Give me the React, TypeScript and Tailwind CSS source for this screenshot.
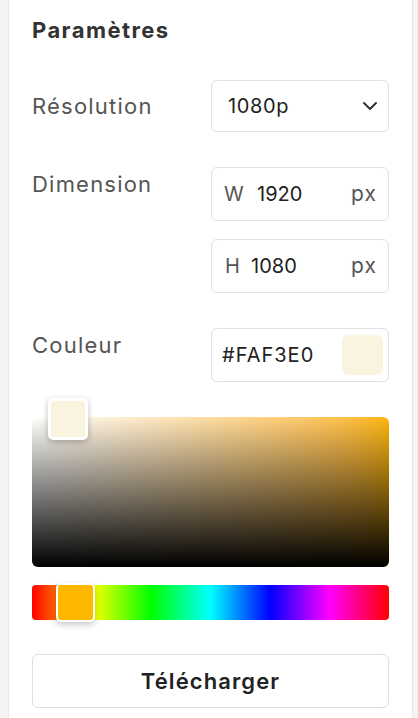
import { ChevronDown } from 'lucide-react';

// Settings panel with resolution, size and colour picker
const FIELD = 'h-[54px] rounded-md border border-[#e2e0e0] bg-white flex items-center';

function Label({ children, className = '' }: { children: React.ReactNode; className?: string }) {
  return <div className={`text-[22px] leading-7 text-[#555] tracking-[0.055em] ${className}`}>{children}</div>;
}

export default function App() {
  return (
    <div className="min-h-[718px] bg-[#f6f3f3] pl-[8px] pr-[5px] font-['Inter',sans-serif]">
      <div className="min-h-[718px] bg-white border-x border-[#ebe5e5] px-[23px] pt-[16px] pb-[10px]">
        <h2 className="text-[22px] leading-7 font-bold text-[#333] tracking-[0.065em]">Paramètres</h2>

        {/* Résolution */}
        <div className="mt-[36px] flex items-center">
          <Label className="w-[179px]">Résolution</Label>
          <div className={`${FIELD} flex-1 !h-[52px] justify-between pl-[16px] pr-[6px]`}>
            <span className="text-[20px] text-[#222] tracking-[0.03em]">1080p</span>
            <ChevronDown className="w-[24px] h-[24px] text-[#333]" strokeWidth={2} />
          </div>
        </div>

        {/* Dimension */}
        <div className="mt-[35px] flex items-start">
          <Label className="w-[179px] pt-[3px]">Dimension</Label>
          <div className="flex-1 flex flex-col gap-[18px]">
            <div className={`${FIELD} pl-[12px] pr-[11px] text-[20px]`}>
              <span className="text-[#555] w-[33px]">W</span>
              <span className="text-[#222]">1920</span>
              <span className="ml-auto text-[#555] text-[21px] tracking-[0.05em]">px</span>
            </div>
            <div className={`${FIELD} pl-[13px] pr-[11px] text-[20px]`}>
              <span className="text-[#555] w-[26px]">H</span>
              <span className="text-[#222]">1080</span>
              <span className="ml-auto text-[#555] text-[21px] tracking-[0.05em]">px</span>
            </div>
          </div>
        </div>

        {/* Couleur */}
        <div className="mt-[35px] flex items-start">
          <Label className="w-[179px] pt-[3px]">Couleur</Label>
          <div className={`${FIELD} flex-1 pl-[10px] pr-[5px] justify-between`}>
            <span className="text-[20px] text-[#222] tracking-[0.05em]">#FAF3E0</span>
            <div className="w-[41px] h-[40px] rounded-md bg-[#FAF3E0]" />
          </div>
        </div>

        {/* Saturation / value area */}
        <div className="relative mt-[35px] h-[150px] rounded-md bg-gradient-to-r from-white to-[#ffb700]">
          <div className="absolute inset-0 rounded-md bg-gradient-to-t from-black to-transparent" />
          <div className="absolute left-[16px] top-[-19px] w-[40px] h-[42px] rounded-[5px] border-[3px] border-white bg-[#FAF3E0] shadow-[0_2px_6px_rgba(0,0,0,0.25)]" />
        </div>

        {/* Hue bar */}
        <div className="relative mt-[18px] h-[35px] rounded-[4px] bg-[linear-gradient(to_right,#ff0000,#ffff00,#00ff00,#00ffff,#0000ff,#ff00ff,#ff0000)]">
          <div className="absolute left-[24px] top-[-2px] w-[39px] h-[39px] rounded-[5px] border-[2px] border-white bg-[#ffb800] shadow-[0_3px_6px_rgba(0,0,0,0.2)]" />
        </div>

        {/* Download */}
        <button className="mt-[34px] w-full h-[54px] rounded-md border border-[#e0dede] bg-white text-[22px] font-semibold text-[#222] tracking-[0.05em]">
          Télécharger
        </button>
      </div>
    </div>
  );
}
